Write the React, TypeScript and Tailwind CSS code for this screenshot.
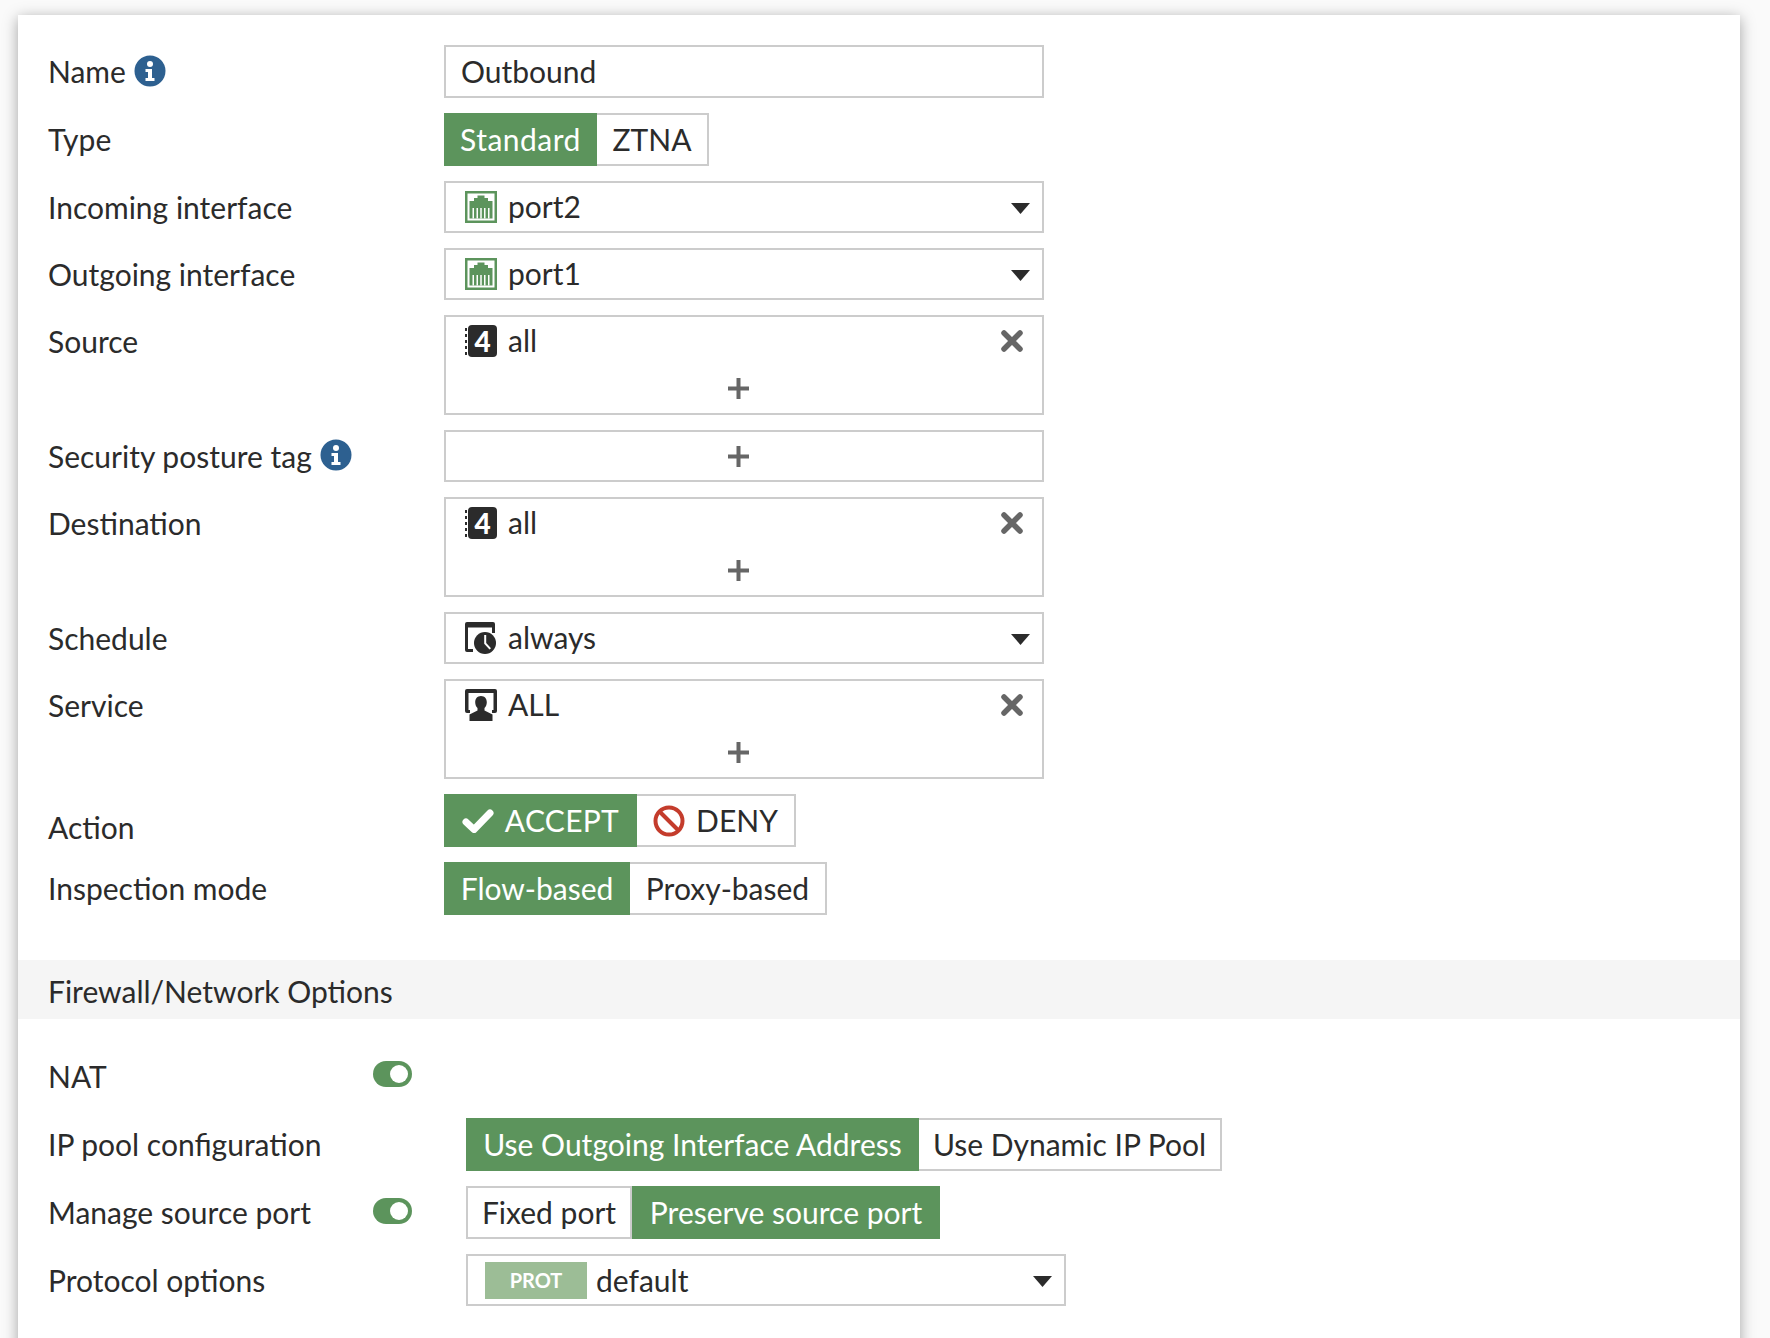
import type { ReactNode } from "react";

const FONT = "font-['Lato','Open_Sans',sans-serif]";

function InfoIcon() {
  return (
    <svg viewBox="0 0 32 32" className="ml-2 h-[32px] w-[32px] shrink-0 -translate-y-[1px]">
      <circle cx="16" cy="16" r="15.5" fill="#2d6090" />
      <circle cx="16" cy="9" r="3" fill="#fff" />
      <path d="M11.5 14h6.5v9h2.5v3h-9v-3H14v-6h-2.5z" fill="#fff" />
    </svg>
  );
}

function PortIcon() {
  return (
    <svg viewBox="0 0 32 32" className="h-[32px] w-[32px] shrink-0">
      <rect width="32" height="32" fill="#5c945c" />
      <rect x="2.5" y="2.5" width="27" height="27" fill="#fff" />
      <path d="M4.500 10H9V7h3.500V4.500h7V7H23v3h4.500v17.500h-23z" fill="#5c945c" />
      <path
        d="M7.500 17H9v10.500H7.500zM11.500 17H13v10.500h-1.500zM15.250 17h1.500v10.500h-1.500zM19 17h1.500v10.500H19zM23 17h1.500v10.500H23z"
        fill="#fff"
      />
    </svg>
  );
}

function AddressIcon() {
  return (
    <div className="flex h-[32px] w-[32px] shrink-0 items-center">
      <svg viewBox="0 0 3 32" className="h-[32px] w-[3px] shrink-0">
        <path d="M0 3h2v3H0zM0 9h2v3H0zM0 15h2v3H0zM0 21h2v3H0zM0 27h2v3H0z" fill="#2b2b2b" />
      </svg>
      <div className="flex h-[32px] w-[29px] items-center justify-center rounded-[4px] bg-[#2b2b2b] text-[28px] font-black leading-[32px] text-white">4</div>
    </div>
  );
}

function ScheduleIcon() {
  return (
    <svg viewBox="0 0 32 32" className="h-[32px] w-[32px] shrink-0">
      <path d="M2 0h26a2 2 0 0 1 2 2v9h-3V5.500H3V27h5v3H2a2 2 0 0 1-2-2V2a2 2 0 0 1 2-2z" fill="#2b2b2b" />
      <circle cx="20" cy="21" r="12" fill="#fff" />
      <circle cx="20" cy="21" r="11" fill="#2b2b2b" />
      <path d="M19.200 13h2v8l4.800 5.200-1.500 1.400-5.300-5.800z" fill="#fff" />
    </svg>
  );
}

function ServiceIcon() {
  return (
    <svg viewBox="0 0 32 32" className="h-[32px] w-[32px] shrink-0">
      <path
        d="M2 0h28a2 2 0 0 1 2 2v20a2 2 0 0 1-2 2h-3v-3h1.500V4h-25v17H5v3H2a2 2 0 0 1-2-2V2a2 2 0 0 1 2-2z"
        fill="#2b2b2b"
      />
      <path
        d="M16 7c3.800 0 5.800 2.800 5.800 6.200 0 2.600-1 4.600-2.300 5.800v2.500l8 4v6.500h-23V25.500l8-4V19c-1.300-1.200-2.300-3.200-2.300-5.800C10.200 9.800 12.200 7 16 7z"
        fill="#2b2b2b"
      />
    </svg>
  );
}

function Caret() {
  return (
    <svg viewBox="0 0 19 11" className="h-[11px] w-[19px] shrink-0 translate-y-[1px]">
      <path d="M0 0h19L9.500 11z" fill="#2b2b2b" />
    </svg>
  );
}

function Cross() {
  return (
    <svg viewBox="0 0 22 22" className="h-[22px] w-[22px] shrink-0">
      <path d="M3 3l16 16M19 3L3 19" stroke="#666" strokeWidth="5.500" strokeLinecap="round" />
    </svg>
  );
}

function Plus() {
  return (
    <svg viewBox="0 0 21 21" className="h-[21px] w-[21px]">
      <path d="M10.500 0v21M0 10.500h21" stroke="#666" strokeWidth="4" />
    </svg>
  );
}

function Row({ label, info, children, h = "h-[52px]", top, labelClass = "" }: { label: string; info?: boolean; children: ReactNode; h?: string; top?: boolean; labelClass?: string }) {
  return (
    <div className="mb-[15px] flex">
      <div className={`flex w-[396px] shrink-0 items-center ${top ? "h-[52px]" : h} ${labelClass}`}>
        <span>{label}</span>
        {info ? <InfoIcon /> : null}
      </div>
      {children}
    </div>
  );
}

function Seg({ items, icons }: { items: { text: string; w: string; on?: boolean; cls?: string }[]; icons?: ReactNode[] }) {
  return (
    <div className="flex h-[53px]">
      {items.map((item, i) => (
        <div
          key={item.text}
          className={`flex items-center justify-center gap-[11px] ${item.w} ${item.cls ?? ""} ${
            item.on ? "bg-[#5c945c] text-white" : "border-2 border-l-0 border-[#ccc] first:border-l-2"
          }`}
        >
          {icons ? icons[i] : null}
          {item.text}
        </div>
      ))}
    </div>
  );
}

function Select({ icon, text }: { icon: ReactNode; text: string }) {
  return (
    <div className="flex h-[52px] w-[600px] items-center border-2 border-[#ccc] pl-[19px] pr-[12px]">
      {icon}
      <span className="ml-[11px] flex-1 -translate-y-[1px]">{text}</span>
      <Caret />
    </div>
  );
}

function MultiSelect({ icon, text }: { icon: ReactNode; text: string }) {
  return (
    <div className="h-[100px] w-[600px] border-2 border-[#ccc]">
      <div className="flex items-center pl-[19px] pr-[19px] pt-[8px]">
        {icon}
        <span className="ml-[11px] flex-1 -translate-y-[1px] leading-[32px]">{text}</span>
        <Cross />
      </div>
      <div className="flex justify-center pr-[12px] pt-[21px]">
        <Plus />
      </div>
    </div>
  );
}

function Toggle() {
  return (
    <div className="flex h-[26px] w-[39px] items-center justify-end rounded-full bg-[#5c945c] pr-[4px]">
      <div className="h-[18px] w-[18px] rounded-full bg-white" />
    </div>
  );
}

function OptionRow({ label, toggle, h = "h-[53px]", children }: { label: string; toggle?: boolean; h?: string; children?: ReactNode }) {
  return (
    <div className={`mb-[15px] flex items-center ${h}`}>
      <div className="w-[325px] shrink-0">{label}</div>
      <div className="w-[93px] shrink-0 -translate-y-[2px]">{toggle ? <Toggle /> : null}</div>
      {children}
    </div>
  );
}

export default function App() {
  return (
    <div className={`h-[1338px] overflow-hidden bg-[#fafafa] pl-[18px] pr-[30px] pt-[15px] text-[30px] text-[#2b2b2b] ${FONT}`}>
      <div className="h-[1400px] bg-white pt-[30px] shadow-[0_3px_14px_rgba(0,0,0,0.35)]">
        <div className="px-[30px]">
          <Row label="Name" info h="h-[53px]">
            <div className="flex h-[53px] w-[600px] items-center border-2 border-[#ccc] px-[15px]">Outbound</div>
          </Row>
          <Row label="Type" h="h-[53px]">
            <Seg items={[{ text: "Standard", w: "w-[153px]", on: true, cls: "tracking-[0.5px]" }, { text: "ZTNA", w: "w-[112px]" }]} />
          </Row>
          <Row label="Incoming interface">
            <Select icon={<PortIcon />} text="port2" />
          </Row>
          <Row label="Outgoing interface">
            <Select icon={<PortIcon />} text="port1" />
          </Row>
          <Row label="Source" top>
            <MultiSelect icon={<AddressIcon />} text="all" />
          </Row>
          <Row label="Security posture tag" info>
            <div className="flex h-[52px] w-[600px] items-center justify-center border-2 border-[#ccc] pr-[12px]">
              <Plus />
            </div>
          </Row>
          <Row label="Destination" top>
            <MultiSelect icon={<AddressIcon />} text="all" />
          </Row>
          <Row label="Schedule">
            <Select icon={<ScheduleIcon />} text="always" />
          </Row>
          <Row label="Service" top>
            <MultiSelect icon={<ServiceIcon />} text="ALL" />
          </Row>
          <Row label="Action" h="h-[53px]" labelClass="pt-[14px]">
            <Seg
              items={[{ text: "ACCEPT", w: "w-[193px]", on: true, cls: "tracking-[0.3px]" }, { text: "DENY", w: "w-[159px]" }]}
              icons={[
                <svg key="ok" viewBox="0 0 32 24" className="h-[24px] w-[32px]">
                  <path d="M4 13l8 7.500L28 4" fill="none" stroke="#fff" strokeWidth="7" strokeLinecap="round" strokeLinejoin="round" />
                </svg>,
                <svg key="no" viewBox="0 0 32 32" className="h-[32px] w-[32px]">
                  <circle cx="16" cy="16" r="13.500" fill="none" stroke="#c43c2c" strokeWidth="4" />
                  <path d="M6.500 6.500l19 19" stroke="#c43c2c" strokeWidth="4" />
                </svg>,
              ]}
            />
          </Row>
          <Row label="Inspection mode" h="h-[53px]">
            <Seg items={[{ text: "Flow-based", w: "w-[186px]", on: true }, { text: "Proxy-based", w: "w-[197px]" }]} />
          </Row>
        </div>

        <div className="mt-[45px] flex h-[59px] items-center bg-[#f5f5f5] px-[30px] pt-[4px]">Firewall/Network Options</div>

        <div className="px-[30px] pt-[32px]">
          <OptionRow label="NAT" toggle h="h-[50px]" />
          <div className="h-[2px]" />
          <OptionRow label="IP pool configuration">
            <Seg items={[{ text: "Use Outgoing Interface Address", w: "w-[453px]", on: true }, { text: "Use Dynamic IP Pool", w: "w-[303px]" }]} />
          </OptionRow>
          <OptionRow label="Manage source port" toggle>
            <Seg items={[{ text: "Fixed port", w: "w-[166px]" }, { text: "Preserve source port", w: "w-[308px]", on: true }]} />
          </OptionRow>
          <OptionRow label="Protocol options" h="h-[52px]">
            <div className="flex h-[52px] w-[600px] items-center border-2 border-[#ccc] pl-[17px] pr-[12px]">
              <div className="flex h-[37px] w-[102px] items-center justify-center bg-[#9cbd96] text-[20px] font-bold text-white">PROT</div>
              <span className="ml-[9px] flex-1">default</span>
              <Caret />
            </div>
          </OptionRow>
        </div>
      </div>
    </div>
  );
}
